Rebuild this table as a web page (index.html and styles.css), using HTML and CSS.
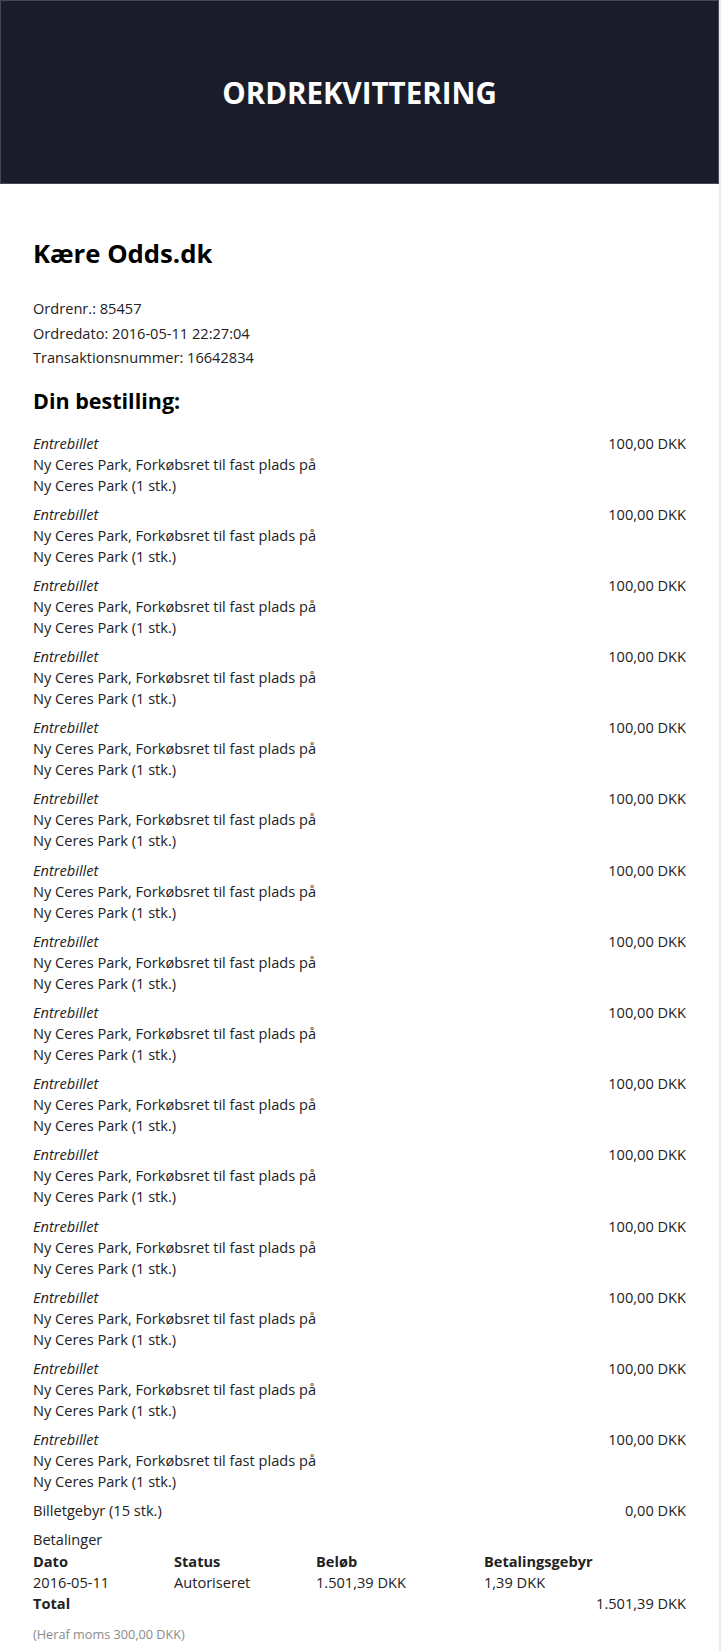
FILE: index.html
```html
<!DOCTYPE html>
<html lang="da">

<head>
  <meta charset="UTF-8">
  <meta name="viewport" content="width=device-width, initial-scale=1.0">
  <title>Ordrekvittering</title>
  <link rel="stylesheet" href="styles.css">
</head>

<body>
  <div class="page">
    <header class="top">
      <h1>ORDREKVITTERING</h1>
    </header>

    <main class="receipt">
      <h2 class="greeting">Kære Odds.dk</h2>

      <div class="meta">
        <p>Ordrenr.: 85457</p>
        <p>Ordredato: 2016-05-11 22:27:04</p>
        <p>Transaktionsnummer: 16642834</p>
      </div>

      <h3 class="section">Din bestilling:</h3>

      <div class="items">
        <div class="item">
          <div class="desc"><em>Entrebillet</em><br>Ny Ceres Park, Forkøbsret til fast plads på Ny Ceres Park (1 stk.)</div>
          <div class="price">100,00 DKK</div>
        </div>
        <div class="item">
          <div class="desc"><em>Entrebillet</em><br>Ny Ceres Park, Forkøbsret til fast plads på Ny Ceres Park (1 stk.)</div>
          <div class="price">100,00 DKK</div>
        </div>
        <div class="item">
          <div class="desc"><em>Entrebillet</em><br>Ny Ceres Park, Forkøbsret til fast plads på Ny Ceres Park (1 stk.)</div>
          <div class="price">100,00 DKK</div>
        </div>
        <div class="item">
          <div class="desc"><em>Entrebillet</em><br>Ny Ceres Park, Forkøbsret til fast plads på Ny Ceres Park (1 stk.)</div>
          <div class="price">100,00 DKK</div>
        </div>
        <div class="item">
          <div class="desc"><em>Entrebillet</em><br>Ny Ceres Park, Forkøbsret til fast plads på Ny Ceres Park (1 stk.)</div>
          <div class="price">100,00 DKK</div>
        </div>
        <div class="item">
          <div class="desc"><em>Entrebillet</em><br>Ny Ceres Park, Forkøbsret til fast plads på Ny Ceres Park (1 stk.)</div>
          <div class="price">100,00 DKK</div>
        </div>
        <div class="item">
          <div class="desc"><em>Entrebillet</em><br>Ny Ceres Park, Forkøbsret til fast plads på Ny Ceres Park (1 stk.)</div>
          <div class="price">100,00 DKK</div>
        </div>
        <div class="item">
          <div class="desc"><em>Entrebillet</em><br>Ny Ceres Park, Forkøbsret til fast plads på Ny Ceres Park (1 stk.)</div>
          <div class="price">100,00 DKK</div>
        </div>
        <div class="item">
          <div class="desc"><em>Entrebillet</em><br>Ny Ceres Park, Forkøbsret til fast plads på Ny Ceres Park (1 stk.)</div>
          <div class="price">100,00 DKK</div>
        </div>
        <div class="item">
          <div class="desc"><em>Entrebillet</em><br>Ny Ceres Park, Forkøbsret til fast plads på Ny Ceres Park (1 stk.)</div>
          <div class="price">100,00 DKK</div>
        </div>
        <div class="item">
          <div class="desc"><em>Entrebillet</em><br>Ny Ceres Park, Forkøbsret til fast plads på Ny Ceres Park (1 stk.)</div>
          <div class="price">100,00 DKK</div>
        </div>
        <div class="item">
          <div class="desc"><em>Entrebillet</em><br>Ny Ceres Park, Forkøbsret til fast plads på Ny Ceres Park (1 stk.)</div>
          <div class="price">100,00 DKK</div>
        </div>
        <div class="item">
          <div class="desc"><em>Entrebillet</em><br>Ny Ceres Park, Forkøbsret til fast plads på Ny Ceres Park (1 stk.)</div>
          <div class="price">100,00 DKK</div>
        </div>
        <div class="item">
          <div class="desc"><em>Entrebillet</em><br>Ny Ceres Park, Forkøbsret til fast plads på Ny Ceres Park (1 stk.)</div>
          <div class="price">100,00 DKK</div>
        </div>
        <div class="item">
          <div class="desc"><em>Entrebillet</em><br>Ny Ceres Park, Forkøbsret til fast plads på Ny Ceres Park (1 stk.)</div>
          <div class="price">100,00 DKK</div>
        </div>
      </div>

      <div class="item fee">
        <div class="desc">Billetgebyr (15 stk.)</div>
        <div class="price">0,00 DKK</div>
      </div>

      <div class="payments">
        <p class="label">Betalinger</p>
        <div class="pay-grid">
          <b>Dato</b><b>Status</b><b>Beløb</b><b>Betalingsgebyr</b>
          <span>2016-05-11</span><span>Autoriseret</span><span>1.501,39 DKK</span><span>1,39 DKK</span>
        </div>
        <div class="total">
          <b>Total</b>
          <span>1.501,39 DKK</span>
        </div>
      </div>

      <p class="vat">(Heraf moms 300,00 DKK)</p>
    </main>
  </div>
</body>

</html>
```

FILE: styles.css
```css
body {
  margin: 0;
  background: #ececec;
  font-family: "Open Sans", "Liberation Sans", sans-serif;
  font-size: 14.6px;
  color: #222;
}

.page {
  width: 719px;
  min-height: 1651px;
  background: #fff;
}

.top {
  height: 182px;
  background: #1b1c2a;
  border: 1px solid #454656;
  display: flex;
  justify-content: center;
  align-items: center;
}

.top h1 {
  margin: 0;
  color: #fff;
  font-size: 29.5px;
  font-weight: 700;
}

.receipt {
  padding: 53px 33px 0 33px;
}

.greeting {
  margin: 0 0 25px;
  font-size: 25.7px;
  color: #000;
  line-height: 34px;
}

.meta p {
  margin: 0;
  line-height: 24.5px;
}

.section {
  margin: 17px 0 18px;
  font-size: 21.5px;
  color: #000;
  line-height: 28px;
}

.item {
  display: flex;
  justify-content: space-between;
  line-height: 21px;
  margin-bottom: 8.2px;
}

.item .desc {
  width: 300px;
}

.fee {
  margin-top: 3px;
  margin-bottom: 8px;
}

.payments p {
  margin: 0;
}

.label {
  line-height: 21.5px;
}

.pay-grid {
  display: grid;
  grid-template-columns: 141px 142px 168px auto;
  line-height: 21px;
}

.total {
  display: flex;
  justify-content: space-between;
  line-height: 21px;
}

.vat {
  margin: 11px 0 0;
  font-size: 12.7px;
  color: #8a8a8a;
}
```
